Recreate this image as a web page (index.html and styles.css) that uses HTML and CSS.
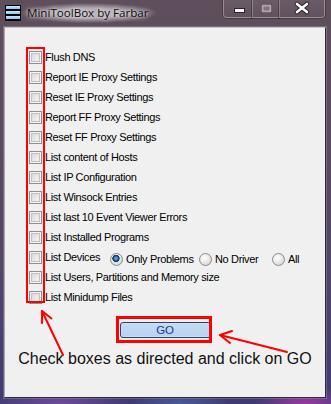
FILE: index.html
```html
<!DOCTYPE html>
<html>
<head>
<meta charset="utf-8">
<link rel="stylesheet" href="styles.css">
</head>
<body>
<div class="window">
  <div class="titlebar">
    <span class="app-icon"><i></i><i></i><i></i></span>
    <span class="title">MiniToolBox by Farbar</span>
    <div class="caption-buttons">
      <span class="cb cb-min"><svg width="29" height="18" viewBox="0 0 29 18"><rect x="10.5" y="8.5" width="10" height="4" fill="#fff" stroke="#2a2228" stroke-width="1"/></svg></span>
      <span class="cb cb-max"><svg width="27" height="18" viewBox="0 0 27 18"><rect x="8.5" y="4.5" width="10" height="8" fill="#85727f" stroke="#2e262c" stroke-width="1"/><rect x="9.5" y="5.5" width="8" height="6" fill="none" stroke="#b3a5ae" stroke-width="2"/></svg></span>
      <span class="cb cb-close"><svg width="46" height="18" viewBox="0 0 46 18"><path d="M17 4 L27 12 M27 4 L17 12" stroke="#2a2228" stroke-width="4.5" stroke-linecap="round"/><path d="M17 4 L27 12 M27 4 L17 12" stroke="#fff" stroke-width="2.6" stroke-linecap="round"/></svg></span>
    </div>
  </div>
  <div class="client">
    <ul class="options">
      <li class="row"><span class="check"></span><span class="label">Flush DNS</span></li>
      <li class="row"><span class="check"></span><span class="label">Report IE Proxy Settings</span></li>
      <li class="row"><span class="check"></span><span class="label">Reset IE Proxy Settings</span></li>
      <li class="row"><span class="check"></span><span class="label">Report FF Proxy Settings</span></li>
      <li class="row"><span class="check"></span><span class="label">Reset FF Proxy Settings</span></li>
      <li class="row"><span class="check"></span><span class="label">List content of Hosts</span></li>
      <li class="row"><span class="check"></span><span class="label">List IP Configuration</span></li>
      <li class="row"><span class="check"></span><span class="label">List Winsock Entries</span></li>
      <li class="row"><span class="check"></span><span class="label">List last 10 Event Viewer Errors</span></li>
      <li class="row"><span class="check"></span><span class="label">List Installed Programs</span></li>
      <li class="row"><span class="check"></span><span class="label label-devices">List Devices</span>
        <span class="radios">
          <span class="radio-opt opt-1"><span class="radio selected"></span><span class="label">Only Problems</span></span>
          <span class="radio-opt opt-2"><span class="radio"></span><span class="label">No Driver</span></span>
          <span class="radio-opt opt-3"><span class="radio"></span><span class="label">All</span></span>
        </span>
      </li>
      <li class="row"><span class="check"></span><span class="label">List Users, Partitions and Memory size</span></li>
      <li class="row"><span class="check"></span><span class="label">List Minidump Files</span></li>
    </ul>
    <div class="go-wrap"><button class="go">GO</button></div>
    <p class="hint">Check boxes as directed and click on GO</p>
  </div>
  <svg class="annotations" width="331" height="404" viewBox="0 0 331 404">
    <g fill="none" stroke="#f00">
      <rect x="27" y="48" width="17" height="254" stroke-width="2"/>
      <rect x="117.5" y="317.5" width="93" height="24" stroke-width="3"/>
      <g stroke-width="2" stroke-linecap="round" stroke-linejoin="round">
        <path d="M63 355 L42 311"/>
        <path d="M42 323 L42 311 L51.5 318.5"/>
        <path d="M287 352 L220 335"/>
        <path d="M230 343 L220 335 L232 331"/>
      </g>
    </g>
  </svg>
</div>
</body>
</html>
```
FILE: styles.css
```css
* {
  box-sizing: border-box;
  margin: 0;
  padding: 0;
}

html, body {
  width: 331px;
  height: 404px;
  overflow: hidden;
}

body {
  font-family: "Liberation Sans", Arial, sans-serif;
  background: #4a4066;
}

.window {
  position: relative;
  width: 331px;
  height: 404px;
  display: flex;
  flex-direction: column;
  background:
    radial-gradient(ellipse 70px 16px at 60px 404px, rgba(150, 90, 190, 0.55), transparent),
    radial-gradient(ellipse 50px 14px at 180px 404px, rgba(90, 130, 200, 0.45), transparent),
    radial-gradient(ellipse 50px 18px at 305px 404px, rgba(190, 60, 180, 0.7), transparent),
    linear-gradient(180deg, #5f4e5b 0%, #5a4b60 35%, #51456a 70%, #3f3b72 100%);
}

/* Title bar */
.titlebar {
  flex: none;
  height: 27px;
  display: flex;
  align-items: flex-start;
}

.app-icon {
  margin: 5px 0 0 5px;
  width: 16px;
  height: 16px;
  background: #050505;
  display: flex;
  flex-direction: column;
  gap: 2px;
  padding: 1px;
}

.app-icon i {
  display: block;
  height: 3px;
  background: linear-gradient(180deg, #cfe9ff 0%, #8cc4ee 100%);
}

.title {
  margin: 3px 0 0 0;
  font-family: "Open Sans", "Noto Sans", sans-serif;
  font-size: 11.6px;
  line-height: 16px;
  color: #0a0a0a;
  padding: 2px 8px 2px 6px;
  border-radius: 10px;
  background: radial-gradient(ellipse at center, rgba(214, 206, 214, 0.7) 35%, rgba(214, 206, 214, 0) 72%);
  text-shadow: 0 0 6px rgba(255, 255, 255, 0.85), 0 0 3px rgba(255, 255, 255, 0.6);
}

.caption-buttons {
  margin-left: auto;
  margin-right: 6px;
  display: flex;
  height: 18px;
}

.cb {
  display: block;
  height: 18px;
  border: 1px solid rgba(255, 255, 255, 0.32);
  border-top: none;
  background: linear-gradient(180deg, rgba(255, 255, 255, 0.08), rgba(255, 255, 255, 0.02));
  box-shadow: 0 0 0 1px rgba(0, 0, 0, 0.25);
}

.cb svg {
  display: block;
}

.cb-min {
  width: 29px;
  border-bottom-left-radius: 4px;
  border-right: none;
}

.cb-max {
  width: 27px;
  border-right: none;
}

.cb-close {
  width: 46px;
  border-bottom-right-radius: 4px;
}

/* Client area */
.client {
  flex: 1;
  margin: 0 5px 6px 4px;
  background: #f0f0f0;
  border: 1px solid;
  border-color: #c8c3c9 #2f2a33 #2f2a33 #aaa4b0;
  box-shadow: 0 0 0 1px rgba(255, 255, 255, 0.18);
}

.options {
  list-style: none;
  padding: 19px 0 0 24px;
}

.row {
  height: 20px;
  display: flex;
  align-items: center;
}

.check {
  flex: none;
  width: 13px;
  height: 13px;
  margin-right: 3px;
  border: 1px solid #8e8f8f;
  background: linear-gradient(135deg, #cdd0d4 0%, #e6e7e9 50%, #f7f7f7 100%);
  box-shadow: inset 0 0 0 1px #f4f4f4, inset 0 0 0 2px #bfc3c8;
}

.label {
  font-size: 11px;
  letter-spacing: -0.35px;
  color: #000;
  white-space: nowrap;
}

.label-devices {
  width: 65px;
}

.radios {
  display: flex;
  align-items: center;
  margin-top: 4px;
}

.radio-opt {
  display: flex;
  align-items: center;
}

.opt-1 {
  width: 89px;
}

.opt-2 {
  width: 73px;
}

.radio {
  flex: none;
  width: 13px;
  height: 13px;
  margin-right: 3px;
  border-radius: 50%;
  border: 1px solid #8a8b8c;
  background: radial-gradient(circle at 40% 35%, #ffffff 0%, #e9e9e9 45%, #c9cbce 100%);
}

.radio.selected {
  background:
    radial-gradient(circle at 45% 40%, #5d9ee0 0 1px, #1a4f8c 2.4px, #0d3866 3.4px, rgba(13, 56, 102, 0) 3.9px),
    radial-gradient(circle at 40% 35%, #ffffff 0%, #e9e9e9 45%, #c9cbce 100%);
}

/* GO button */
.go-wrap {
  display: flex;
  justify-content: center;
  padding-top: 15px;
}

.go {
  width: 91px;
  height: 16px;
  border: 1px solid #23406e;
  border-radius: 3px;
  background: linear-gradient(180deg, #c4ddf3 0%, #b7d2ee 100%);
  box-shadow: inset 0 0 0 1px rgba(200, 225, 248, 0.9);
  font-family: "Liberation Sans", Arial, sans-serif;
  font-size: 11.5px;
  line-height: 14px;
  color: #22378a;
  letter-spacing: -0.3px;
}

.hint {
  margin-top: 12px;
  font-size: 16px;
  line-height: 18px;
  text-align: center;
  color: #111;
}

/* Red annotation overlay */
.annotations {
  position: absolute;
  left: 0;
  top: 0;
  pointer-events: none;
}
```
